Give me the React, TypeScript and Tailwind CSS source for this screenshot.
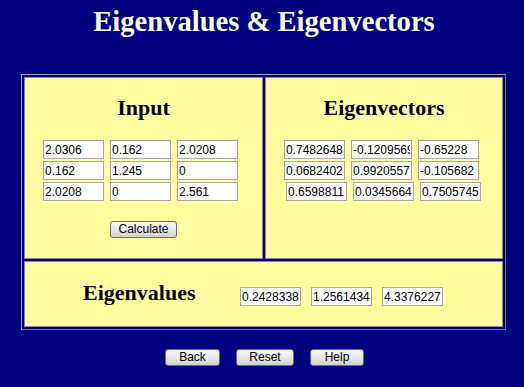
const matrix = [
  ["2.0306", "0.162", "2.0208"],
  ["0.162", "1.245", "0"],
  ["2.0208", "0", "2.561"],
];

const vectors = [
  ["0.7482648", "-0.1209569", "-0.65228"],
  ["0.0682402", "0.9920557", "-0.105682"],
  ["0.6598811", "0.0345664", "0.7505745"],
];

const values = ["0.2428338", "1.2561434", "4.3376227"];

function Field({ value }: { value: string }) {
  return (
    <input
      readOnly
      value={value}
      className="h-[19px] w-[61px] border border-[#a8a8a8] bg-white px-[1px] font-['Liberation_Sans',Arial,sans-serif] text-[12px] text-black outline-none"
    />
  );
}

function Btn({ label, w }: { label: string; w: string }) {
  return (
    <button
      className={`${w} h-[17px] rounded-[3px] border border-[#707070] bg-linear-to-b from-[#f6f6f6] via-[#e8e8e8] to-[#d0d0d0] font-['Liberation_Sans',Arial,sans-serif] text-[12px] leading-[15px] text-black`}
    >
      {label}
    </button>
  );
}

function Heading({ children }: { children: string }) {
  return (
    <h2 className="font-['Liberation_Serif','Times_New_Roman',serif] text-[22px] font-bold leading-[26px] text-black">
      {children}
    </h2>
  );
}

export default function App() {
  return (
    <div className="h-[387px] w-[524px] overflow-hidden bg-[#000080]">
      <h1 className="pt-[6px] pl-[4px] text-center font-['Liberation_Serif','Times_New_Roman',serif] text-[28.6px] font-bold leading-[32px] text-white">
        Eigenvalues &amp; Eigenvectors
      </h1>

      <div className="ml-[21px] mt-[36px] w-[485px] border border-t-[#a0a0b8] border-l-[#a0a0b8] border-b-[#707080] border-r-[#707080] p-[2px]">
        <div className="grid grid-cols-[239px_238px] grid-rows-[182px_66px] gap-[2px]">
          {/* input matrix */}
          <div className="border border-[#888890] bg-[#ffffa0] pt-[17px]">
            <div className="text-center">
              <Heading>Input</Heading>
            </div>
            <div className="mt-[19px] flex flex-col gap-[2px] pl-[18px]">
              {matrix.map((row, i) => (
                <div key={i} className="flex gap-[6px]">
                  {row.map((v, j) => (
                    <Field key={j} value={v} />
                  ))}
                </div>
              ))}
            </div>
            <div className="mt-[20px] flex justify-center">
              <Btn label="Calculate" w="w-[67px]" />
            </div>
          </div>

          {/* eigenvectors */}
          <div className="border border-[#888890] bg-[#ffffa0] pt-[17px]">
            <div className="text-center">
              <Heading>Eigenvectors</Heading>
            </div>
            <div className="mt-[19px] flex flex-col gap-[2px] pl-[18px]">
              {vectors.map((row, i) => (
                <div key={i} className={`flex gap-[6px] ${i === 2 ? "pl-[2px]" : ""}`}>
                  {row.map((v, j) => (
                    <Field key={j} value={v} />
                  ))}
                </div>
              ))}
            </div>
          </div>

          {/* eigenvalues */}
          <div className="col-span-2 flex items-start border border-[#888890] bg-[#ffffa0] pl-[58px] pt-[18px]">
            <div className="w-[157px]">
              <Heading>Eigenvalues</Heading>
            </div>
            <div className="mt-[7px] flex gap-[10px]">
              {values.map((v, i) => (
                <Field key={i} value={v} />
              ))}
            </div>
          </div>
        </div>
      </div>

      <div className="mt-[19px] flex justify-center gap-[16px] pl-[5px]">
        <Btn label="Back" w="w-[55px]" />
        <Btn label="Reset" w="w-[58px]" />
        <Btn label="Help" w="w-[54px]" />
      </div>
    </div>
  );
}
